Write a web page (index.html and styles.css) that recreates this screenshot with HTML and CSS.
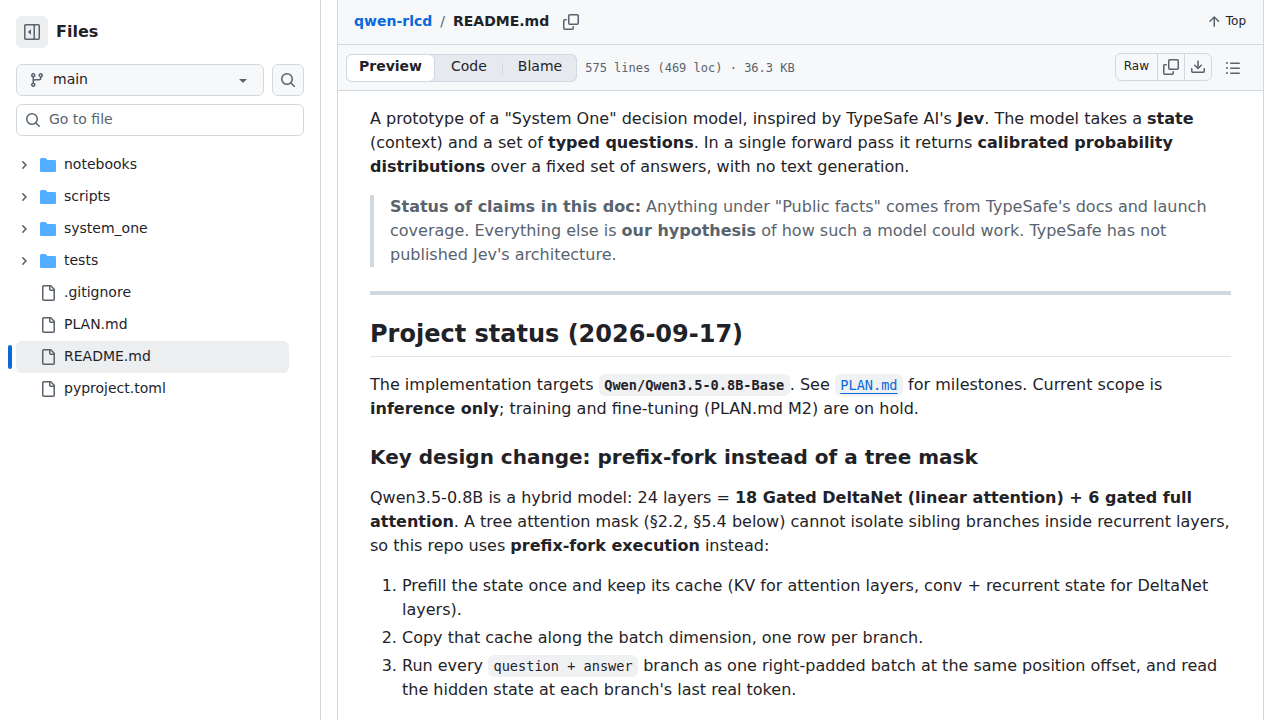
FILE: index.html
```html
<!DOCTYPE html>
<html lang="en">
<head>
<meta charset="utf-8">
<meta name="viewport" content="width=device-width, initial-scale=1">
<title>qwen-rlcd/README.md</title>
<link rel="stylesheet" href="styles.css">
</head>
<body>
<svg class="sprite" aria-hidden="true">
  <symbol id="i-panel" viewBox="0 0 16 16"><path d="m4.177 7.823 2.396-2.396A.25.25 0 0 1 7 5.604v4.792a.25.25 0 0 1-.427.177L4.177 8.177a.25.25 0 0 1 0-.354Z"/><path d="M0 1.75C0 .784.784 0 1.75 0h12.5C15.216 0 16 .784 16 1.75v12.5A1.75 1.75 0 0 1 14.25 16H1.75A1.75 1.75 0 0 1 0 14.25Zm1.75-.25a.25.25 0 0 0-.25.25v12.5c0 .138.112.25.25.25H9.5v-13Zm12.5 13a.25.25 0 0 0 .25-.25V1.75a.25.25 0 0 0-.25-.25H11v13Z"/></symbol>
  <symbol id="i-branch" viewBox="0 0 16 16"><path d="M9.5 3.25a2.25 2.25 0 1 1 3 2.122V6A2.5 2.5 0 0 1 10 8.5H6a1 1 0 0 0-1 1v1.128a2.251 2.251 0 1 1-1.5 0V5.372a2.25 2.25 0 1 1 1.5 0v1.836A2.493 2.493 0 0 1 6 7h4a1 1 0 0 0 1-1v-.628A2.25 2.25 0 0 1 9.5 3.25Zm-6 0a.75.75 0 1 0 1.5 0 .75.75 0 0 0-1.5 0Zm8.25-.75a.75.75 0 1 0 0 1.5.75.75 0 0 0 0-1.5ZM4.25 12a.75.75 0 1 0 0 1.5.75.75 0 0 0 0-1.5Z"/></symbol>
  <symbol id="i-search" viewBox="0 0 16 16"><path d="M10.68 11.74a6 6 0 0 1-7.922-8.982 6 6 0 0 1 8.982 7.922l3.04 3.04a.749.749 0 0 1-.326 1.275.749.749 0 0 1-.734-.215ZM11.5 7a4.499 4.499 0 1 0-8.997 0A4.499 4.499 0 0 0 11.5 7Z"/></symbol>
  <symbol id="i-caret" viewBox="0 0 16 16"><path d="m4.427 7.427 3.396 3.396a.25.25 0 0 0 .354 0l3.396-3.396A.25.25 0 0 0 11.396 7H4.604a.25.25 0 0 0-.177.427Z"/></symbol>
  <symbol id="i-chevron" viewBox="0 0 12 12"><path d="M4.7 10c-.2 0-.4-.1-.5-.2-.3-.3-.3-.8 0-1.1L6.9 6 4.2 3.3c-.3-.3-.3-.8 0-1.1.3-.3.8-.3 1.1 0l3.3 3.2c.3.3.3.8 0 1.1L5.3 9.7c-.2.2-.4.3-.6.3Z"/></symbol>
  <symbol id="i-folder" viewBox="0 0 16 16"><path d="M1.5 1A1.5 1.5 0 0 0 0 2.5v11.25C0 14.44.56 15 1.25 15h13.5c.69 0 1.25-.56 1.25-1.25v-9.5C16 3.56 15.44 3 14.75 3H7.5a.25.25 0 0 1-.2-.1l-.9-1.2C6.07 1.26 5.55 1 5 1H1.5Z"/></symbol>
  <symbol id="i-file" viewBox="0 0 16 16"><path d="M2 1.75C2 .784 2.784 0 3.75 0h6.586c.464 0 .909.184 1.237.513l2.914 2.914c.329.328.513.773.513 1.237v9.586A1.75 1.75 0 0 1 13.25 16h-9.5A1.75 1.75 0 0 1 2 14.25Zm1.75-.25a.25.25 0 0 0-.25.25v12.5c0 .138.112.25.25.25h9.5a.25.25 0 0 0 .25-.25V6h-2.75A1.75 1.75 0 0 1 9 4.25V1.5Zm6.75.062V4.25c0 .138.112.25.25.25h2.688l-.011-.013-2.914-2.914-.013-.011Z"/></symbol>
  <symbol id="i-copy" viewBox="0 0 16 16"><path d="M0 6.75C0 5.784.784 5 1.75 5h1.5a.75.75 0 0 1 0 1.5h-1.5a.25.25 0 0 0-.25.25v7.5c0 .138.112.25.25.25h7.5a.25.25 0 0 0 .25-.25v-1.5a.75.75 0 0 1 1.5 0v1.5A1.75 1.75 0 0 1 9.25 16h-7.5A1.75 1.75 0 0 1 0 14.25Z"/><path d="M5 1.75C5 .784 5.784 0 6.75 0h7.5C15.216 0 16 .784 16 1.75v7.5A1.75 1.75 0 0 1 14.25 11h-7.5A1.75 1.75 0 0 1 5 9.25Zm1.75-.25a.25.25 0 0 0-.25.25v7.5c0 .138.112.25.25.25h7.5a.25.25 0 0 0 .25-.25v-7.5a.25.25 0 0 0-.25-.25Z"/></symbol>
  <symbol id="i-up" viewBox="0 0 16 16"><path d="M3.47 7.78a.75.75 0 0 1 0-1.06l4.25-4.25a.75.75 0 0 1 1.06 0l4.25 4.25a.751.751 0 0 1-.018 1.042.751.751 0 0 1-1.042.018L9 4.81v7.44a.75.75 0 0 1-1.5 0V4.81L4.53 7.78a.75.75 0 0 1-1.06 0Z"/></symbol>
  <symbol id="i-download" viewBox="0 0 16 16"><path d="M2.75 14A1.75 1.75 0 0 1 1 12.25v-2.5a.75.75 0 0 1 1.5 0v2.5c0 .138.112.25.25.25h10.5a.25.25 0 0 0 .25-.25v-2.5a.75.75 0 0 1 1.5 0v2.5A1.75 1.75 0 0 1 13.25 14Z"/><path d="M7.25 7.689V2a.75.75 0 0 1 1.5 0v5.689l1.97-1.969a.749.749 0 1 1 1.06 1.06l-3.25 3.25a.749.749 0 0 1-1.06 0L4.22 6.78a.749.749 0 1 1 1.06-1.06l1.97 1.969Z"/></symbol>
  <symbol id="i-list" viewBox="0 0 16 16"><path d="M5.75 2.5h8.5a.75.75 0 0 1 0 1.5h-8.5a.75.75 0 0 1 0-1.5Zm0 5h8.5a.75.75 0 0 1 0 1.5h-8.5a.75.75 0 0 1 0-1.5Zm0 5h8.5a.75.75 0 0 1 0 1.5h-8.5a.75.75 0 0 1 0-1.5ZM2 14a1 1 0 1 1 0-2 1 1 0 0 1 0 2Zm1-6a1 1 0 1 1-2 0 1 1 0 0 1 2 0ZM2 4a1 1 0 1 1 0-2 1 1 0 0 1 0 2Z"/></symbol>
</svg>
<div class="app">
  <aside class="sidebar">
    <header class="sidebar-head">
      <button class="panel-toggle" type="button" aria-label="Collapse file tree"><svg class="icon"><use href="#i-panel"/></svg></button>
      <h2 class="sidebar-title">Files</h2>
    </header>
    <div class="branch-row">
      <div class="field branch">
        <svg class="icon field-icon"><use href="#i-branch"/></svg>
        <select class="control" aria-label="Branch"><option>main</option></select>
        <svg class="icon field-caret"><use href="#i-caret"/></svg>
      </div>
      <button class="search-button" type="button" aria-label="Search this repository"><svg class="icon"><use href="#i-search"/></svg></button>
    </div>
    <div class="field finder">
      <svg class="icon field-icon"><use href="#i-search"/></svg>
      <input class="control" type="text" placeholder="Go to file" aria-label="Go to file">
    </div>
    <nav aria-label="File tree">
      <ul class="tree">
        <li><a class="tree-item" href="#"><svg class="chevron"><use href="#i-chevron"/></svg><svg class="icon folder"><use href="#i-folder"/></svg><span class="tree-name">notebooks</span></a></li>
        <li><a class="tree-item" href="#"><svg class="chevron"><use href="#i-chevron"/></svg><svg class="icon folder"><use href="#i-folder"/></svg><span class="tree-name">scripts</span></a></li>
        <li><a class="tree-item" href="#"><svg class="chevron"><use href="#i-chevron"/></svg><svg class="icon folder"><use href="#i-folder"/></svg><span class="tree-name">system_one</span></a></li>
        <li><a class="tree-item" href="#"><svg class="chevron"><use href="#i-chevron"/></svg><svg class="icon folder"><use href="#i-folder"/></svg><span class="tree-name">tests</span></a></li>
        <li><a class="tree-item file" href="#"><svg class="icon"><use href="#i-file"/></svg><span class="tree-name">.gitignore</span></a></li>
        <li><a class="tree-item file" href="#"><svg class="icon"><use href="#i-file"/></svg><span class="tree-name">PLAN.md</span></a></li>
        <li><a class="tree-item file current" href="#" aria-current="page"><svg class="icon"><use href="#i-file"/></svg><span class="tree-name">README.md</span></a></li>
        <li><a class="tree-item file" href="#"><svg class="icon"><use href="#i-file"/></svg><span class="tree-name">pyproject.toml</span></a></li>
      </ul>
    </nav>
  </aside>
  <main class="main">
    <div class="panel">
      <div class="path-bar">
        <nav class="crumbs" aria-label="Breadcrumb"><a class="crumb-link" href="#">qwen-rlcd</a><span class="crumb-sep">/</span><h1 class="crumb-file">README.md</h1></nav>
        <button class="plain-button" type="button" aria-label="Copy path"><svg class="icon"><use href="#i-copy"/></svg></button>
        <a class="top-link" href="#"><svg class="icon"><use href="#i-up"/></svg><span class="top-label">Top</span></a>
      </div>
      <div class="tool-bar">
        <div class="segments">
          <button class="segment selected" type="button" aria-pressed="true">Preview</button>
          <button class="segment" type="button">Code</button>
          <button class="segment divided" type="button">Blame</button>
        </div>
        <span class="stats">575 lines (469 loc) · 36.3 KB</span>
        <div class="actions">
          <a class="action raw" href="#">Raw</a>
          <button class="action" type="button" aria-label="Copy raw file"><svg class="icon"><use href="#i-copy"/></svg></button>
          <button class="action" type="button" aria-label="Download raw file"><svg class="icon"><use href="#i-download"/></svg></button>
        </div>
        <button class="plain-button outline" type="button" aria-label="Outline"><svg class="icon"><use href="#i-list"/></svg></button>
      </div>
      <article class="markdown">
        <p>A prototype of a "System One" decision model, inspired by TypeSafe AI's <strong>Jev</strong>. The model takes a <strong>state</strong> (context) and a set of <strong>typed questions</strong>. In a single forward pass it returns <strong>calibrated probability distributions</strong> over a fixed set of answers, with no text generation.</p>
        <blockquote><strong>Status of claims in this doc:</strong> Anything under "Public facts" comes from TypeSafe's docs and launch coverage. Everything else is <strong>our hypothesis</strong> of how such a model could work. TypeSafe has not published Jev's architecture.</blockquote>
        <hr>
        <h2>Project status (2026-09-17)</h2>
        <p>The implementation targets <strong><code>Qwen/Qwen3.5-0.8B-Base</code></strong>. See <a href="#"><code>PLAN.md</code></a> for milestones. Current scope is <strong>inference only</strong>; training and fine-tuning (PLAN.md M2) are on hold.</p>
        <h3>Key design change: prefix-fork instead of a tree mask</h3>
        <p>Qwen3.5-0.8B is a hybrid model: 24 layers = <strong>18 Gated DeltaNet (linear attention) + 6 gated full attention</strong>. A tree attention mask (§2.2, §5.4 below) cannot isolate sibling branches inside recurrent layers, so this repo uses <strong>prefix-fork execution</strong> instead:</p>
        <ol>
          <li>Prefill the state once and keep its cache (KV for attention layers, conv + recurrent state for DeltaNet layers).</li>
          <li>Copy that cache along the batch dimension, one row per branch.</li>
          <li>Run every <code>question + answer</code> branch as one right-padded batch at the same position offset, and read the hidden state at each branch's last real token.</li>
        </ol>
      </article>
    </div>
  </main>
</div>
</body>
</html>
```
FILE: styles.css
```css
:root {
  --fg: #1f2328;
  --muted: #59636e;
  --border: #d1d9e0;
  --bar: #f6f8fa;
  --blue: #0969da;
}

* { box-sizing: border-box; }

body {
  margin: 0;
  background: #fff;
  color: var(--fg);
  font: 14px/20px "DejaVu Sans", sans-serif;
}

button, input, select { font: inherit; color: inherit; }
button { cursor: pointer; padding: 0; }
a { color: inherit; text-decoration: none; }

.sprite { position: absolute; width: 0; height: 0; }
.icon { width: 16px; height: 16px; flex: none; fill: var(--muted); }

.app { display: flex; min-height: 100vh; }

.sidebar {
  flex: none;
  width: 321px;
  padding: 16px;
  border-right: 1px solid var(--border);
}

.sidebar-head { display: flex; align-items: center; gap: 8px; }

.panel-toggle {
  display: grid;
  place-items: center;
  width: 32px;
  height: 32px;
  border: 0;
  border-radius: 6px;
  background: #eceef0;
}

.sidebar-title { margin: 0; font-size: 16px; line-height: 24px; }

.branch-row { display: flex; gap: 8px; margin-top: 16px; }

.field { position: relative; }
.field.branch { flex: 1; }
.field.finder { margin-top: 8px; }

.control {
  display: block;
  width: 100%;
  height: 32px;
  padding: 0 12px 2px 32px;
  border: 1px solid var(--border);
  border-radius: 6px;
  background: #fff;
  appearance: none;
}
.branch .control { padding-left: 36px; background: var(--bar); }
.control::placeholder { color: var(--muted); opacity: 1; }

.field-icon, .field-caret { position: absolute; top: 8px; pointer-events: none; }
.field-icon { left: 9px; }
.branch .field-icon { left: 13px; }
.field-caret { right: 13px; }

.search-button {
  display: grid;
  place-items: center;
  width: 32px;
  height: 32px;
  border: 1px solid var(--border);
  border-radius: 6px;
  background: var(--bar);
}

.tree { margin: 13px 15px 0 0; padding: 0; list-style: none; }

.tree-item {
  position: relative;
  display: flex;
  align-items: center;
  gap: 8px;
  height: 32px;
  padding-left: 2px;
  border-radius: 6px;
}
.tree-item.file { padding-left: 24px; }
.tree-name { padding-bottom: 2px; }
.tree-item.current { background: #eceef0; }
.tree-item.current::before {
  content: "";
  position: absolute;
  left: -8px;
  top: 4px;
  width: 4px;
  height: 24px;
  border-radius: 6px;
  background: var(--blue);
}
.chevron { width: 12px; height: 12px; margin-right: 2px; flex: none; fill: var(--muted); }
.folder { fill: #54aeff; }

.main { flex: 1; min-width: 0; padding: 0 16px; }
.panel { min-height: 100%; border: solid var(--border); border-width: 0 1px; }

.path-bar, .tool-bar {
  display: flex;
  align-items: center;
  background: var(--bar);
  border-bottom: 1px solid var(--border);
}
.path-bar { height: 45px; padding: 0 16px; }
.tool-bar { height: 46px; padding: 0 16px 0 8px; }

.crumbs { display: flex; padding-bottom: 2px; }
.crumb-link { font-weight: 600; color: var(--blue); }
.crumb-sep { padding: 0 8px; color: var(--muted); }
.crumb-file { margin: 0; font-size: 14px; line-height: 20px; }

.plain-button {
  display: grid;
  place-items: center;
  width: 28px;
  height: 28px;
  margin-left: 8px;
  border: 0;
  background: none;
}

.top-link {
  display: flex;
  align-items: center;
  gap: 4px;
  margin-left: auto;
  padding-right: 1px;
  font-size: 12px;
}
.top-label { padding-bottom: 2px; }

.segments {
  display: flex;
  height: 28px;
  border-radius: 6px;
  background: #e6eaef;
  box-shadow: inset 0 0 0 1px var(--border);
}
.segment {
  position: relative;
  padding: 0 15px 3px;
  border: 1px solid transparent;
  border-radius: 6px;
  background: none;
}
.segment.selected {
  padding: 0 12px 3px;
  border-color: var(--border);
  background: #fff;
  font-weight: 600;
}
.segment.divided { padding: 0 14px 3px; }
.segment.divided::before {
  content: "";
  position: absolute;
  left: -2px;
  top: 8px;
  width: 1px;
  height: 12px;
  background: var(--border);
}

.stats {
  margin-left: 8px;
  color: var(--muted);
  font: 12px/20px "DejaVu Sans Mono", monospace;
}

.actions {
  display: flex;
  height: 28px;
  margin: 0 0 2px auto;
  border: 1px solid var(--border);
  border-radius: 6px;
}
.action {
  display: grid;
  place-items: center;
  width: 27px;
  border: 0;
  border-left: 1px solid var(--border);
  background: none;
}
.action.raw { width: auto; padding: 0 8px 2px; border: 0; font-size: 12px; }
.plain-button.outline { margin-left: 7px; }

.markdown { padding: 16px 32px; font-size: 16px; line-height: 24px; }
.markdown p, .markdown blockquote, .markdown ol { margin: 0 0 16px; }
.markdown strong { font-weight: 600; }
.markdown blockquote {
  padding: 0 16px;
  border-left: 4px solid var(--border);
  color: var(--muted);
}
.markdown hr { height: 4px; margin: 24px 0; border: 0; background: var(--border); }
.markdown h2, .markdown h3 { margin: 24px 0 16px; line-height: 1.25; }
.markdown h2 {
  padding-bottom: 7px;
  border-bottom: 1px solid #dfe4e9;
  font-size: 24px;
}
.markdown h3 { font-size: 20px; }
.markdown ol { padding-left: 32px; }
.markdown li + li { margin-top: 4px; }
.markdown code {
  padding: 0.2em 0.4em;
  border-radius: 6px;
  background: #eff1f2;
  font-family: "DejaVu Sans Mono", monospace;
  font-size: 85%;
}
.markdown a { color: var(--blue); text-decoration: underline; text-underline-offset: 3px; }
```
